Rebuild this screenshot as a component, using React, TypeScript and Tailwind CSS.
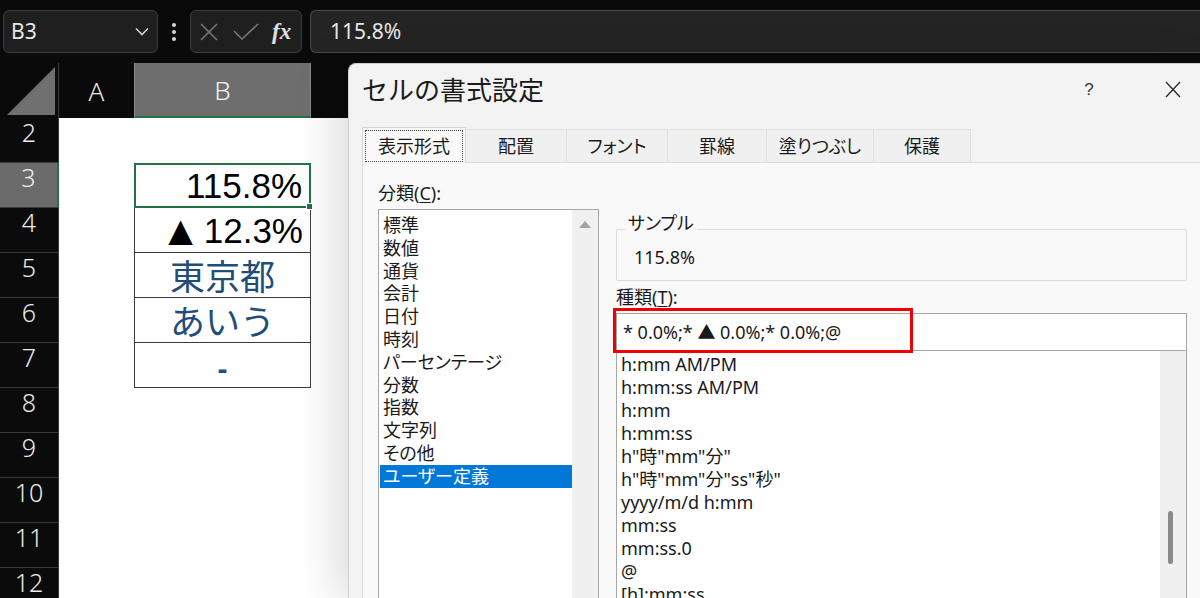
import React from "react";

function TopBar() {
  return (
    <div className="flex h-[63px] shrink-0 items-start bg-[#0a0a0a] pt-[10px] font-['Noto_Sans',sans-serif]">
      <div className="ml-[3px] flex h-[43px] w-[155px] items-center justify-between rounded-[6px] border border-[#3c3c3c] bg-[#1f1f1f] pl-[7px] pr-[8px]">
        <span className="text-[21px] leading-none text-[#e6e6e6]">B3</span>
        <svg width="14" height="9" viewBox="0 0 14 9">
          <path d="M1 1.5l6 6 6-6" fill="none" stroke="#d0d0d0" strokeWidth="1.6" />
        </svg>
      </div>
      <div className="flex h-[43px] w-[32px] items-center justify-center">
        <svg width="6" height="20" viewBox="0 0 6 20">
          <circle cx="3" cy="3" r="2" fill="#d6d6d6" />
          <circle cx="3" cy="10" r="2" fill="#d6d6d6" />
          <circle cx="3" cy="17" r="2" fill="#d6d6d6" />
        </svg>
      </div>
      <div className="flex h-[43px] w-[112px] items-center rounded-[6px] border border-[#3c3c3c] bg-[#1f1f1f] pl-[9px]">
        <svg width="18" height="18" viewBox="0 0 18 18">
          <path d="M1 1l16 16M17 1L1 17" stroke="#7a7a7a" strokeWidth="1.5" fill="none" />
        </svg>
        <svg className="ml-[15px]" width="26" height="17" viewBox="0 0 26 17">
          <path d="M1 8l8 8L25 1" stroke="#7a7a7a" strokeWidth="1.5" fill="none" />
        </svg>
        <span className="ml-[13px] font-['Liberation_Serif',serif] text-[23px] italic font-bold leading-none text-[#e0e0e0]">fx</span>
      </div>
      <div className="ml-[8px] flex h-[43px] flex-1 items-center rounded-l-[6px] border border-r-0 border-[#4a4a4a] bg-[#242424] pl-[19px]">
        <span className="text-[21px] leading-none text-[#e6e6e6]">115.8%</span>
      </div>
    </div>
  );
}

function RowHead({ n, active }: { n: number; active?: boolean }) {
  return (
    <div
      className={
        active
          ? "flex w-[59px] shrink-0 items-center justify-center border-b border-r-2 border-b-[#3a3a3a] border-r-[#217346] bg-[#6b6b6b] pb-[15px] text-[25px] font-light leading-none text-[#ececec]"
          : "flex w-[59px] shrink-0 items-center justify-center border-b border-r border-[#3a3a3a] bg-[#0b0b0b] pb-[15px] text-[25px] font-light leading-none text-[#ececec]"
      }
    >
      {n}
    </div>
  );
}

function Row({ n, active, children }: { n: number; active?: boolean; children?: React.ReactNode }) {
  return (
    <div className="flex h-[45px] shrink-0">
      <RowHead n={n} active={active} />
      <div className="w-[75px] shrink-0 bg-white" />
      <div className="w-[177px] shrink-0 bg-white">{children}</div>
      <div className="flex-1 bg-white" />
    </div>
  );
}

const cellNum = "font-['Liberation_Sans',sans-serif] text-[35px] leading-none text-black";
const cellJp = "font-['Noto_Sans_CJK_JP',sans-serif] text-[35px] leading-none text-[#1f4e79]";

function Sheet() {
  return (
    <div className="flex w-[348px] shrink-0 flex-col font-['Noto_Sans',sans-serif]">
      <div className="flex h-[55px] shrink-0 bg-[#0a0a0a]">
        <div className="flex w-[59px] shrink-0 items-end justify-end border-r border-[#3a3a3a] pb-[3px] pr-[3px]">
          <svg width="48" height="48" viewBox="0 0 48 48">
            <path d="M0 48L48 48L48 0Z" fill="#6f6f6f" />
          </svg>
        </div>
        <div className="flex w-[75px] shrink-0 items-center justify-center text-[26px] font-light leading-none text-[#ececec]">A</div>
        <div className="flex w-[177px] shrink-0 items-center justify-center border-b-2 border-x border-b-[#217346] border-x-[#8a8a8a] bg-[#6e6e6e] text-[26px] font-light leading-none text-[#f2f2f2]">
          B
        </div>
        <div className="flex-1" />
      </div>
      <Row n={2} />
      <Row n={3} active>
        <div className="relative flex h-full items-center justify-end border-2 border-[#217346] pr-[7px]">
          <span className={cellNum}>115.8%</span>
          <div className="absolute -bottom-[4px] -right-[4px] h-[7px] w-[7px] border border-white bg-[#217346]" />
        </div>
      </Row>
      <Row n={4}>
        <div className="flex h-full items-center justify-end border-x-[1.5px] border-b-[1.5px] border-[#3a3a3a] pr-[7px]">
          <span className="mr-[11px] font-['DejaVu_Sans',sans-serif] text-[32px] leading-none text-black">▲</span>
          <span className={cellNum}>12.3%</span>
        </div>
      </Row>
      <Row n={5}>
        <div className="flex h-full items-center justify-center border-x-[1.5px] border-b-[1.5px] border-[#3a3a3a] pb-[1px]">
          <span className={cellJp}>東京都</span>
        </div>
      </Row>
      <Row n={6}>
        <div className="flex h-full items-center justify-center border-x-[1.5px] border-b-[1.5px] border-[#3a3a3a] pb-[1px]">
          <span className={cellJp}>あいう</span>
        </div>
      </Row>
      <Row n={7}>
        <div className="flex h-full items-center justify-center border-x-[1.5px] border-b-[1.5px] border-[#3a3a3a] pt-[8px]">
          <span className="font-['Liberation_Sans',sans-serif] text-[30px] font-bold leading-none text-[#1f4e79]">-</span>
        </div>
      </Row>
      <Row n={8} />
      <Row n={9} />
      <Row n={10} />
      <Row n={11} />
      <Row n={12} />
    </div>
  );
}

const tabs = [
  { label: "配置", w: "w-[101px]" },
  { label: "フォント", w: "w-[101px]" },
  { label: "罫線", w: "w-[99px]" },
  { label: "塗りつぶし", w: "w-[107px]" },
  { label: "保護", w: "w-[97px]" },
];

const categories = [
  "標準",
  "数値",
  "通貨",
  "会計",
  "日付",
  "時刻",
  "パーセンテージ",
  "分数",
  "指数",
  "文字列",
  "その他",
  "ユーザー定義",
];

const formats = [
  "h:mm AM/PM",
  "h:mm:ss AM/PM",
  "h:mm",
  "h:mm:ss",
  'h"時"mm"分"',
  'h"時"mm"分"ss"秒"',
  "yyyy/m/d h:mm",
  "mm:ss",
  "mm:ss.0",
  "@",
  "[h]:mm:ss",
];

function Dialog() {
  return (
    <div className="relative flex min-w-0 flex-1 flex-col rounded-tl-[8px] border-l border-t border-[#cfcfcf] bg-[#f3f3f3] font-['Noto_Sans','Noto_Sans_CJK_JP',sans-serif] text-[#1a1a1a] shadow-[-14px_0_40px_rgba(0,0,0,0.13)] [font-feature-settings:'palt']">
      <div className="flex h-[51px] shrink-0 items-center pl-[13px]">
        <span className="text-[26px] leading-none [font-feature-settings:normal]">セルの書式設定</span>
        <span className="ml-auto w-[20px] text-center font-['Liberation_Sans',sans-serif] text-[17px] leading-none text-[#333]">?</span>
        <div className="ml-[62px] mr-[15px] flex w-[24px] justify-center">
          <svg width="16" height="17" viewBox="0 0 16 17">
            <path d="M1 1l14 15M15 1L1 16" stroke="#2a2a2a" strokeWidth="1.3" fill="none" />
          </svg>
        </div>
      </div>
      <div className="flex h-[47px] shrink-0 items-end pl-[13px]">
        <div className="relative z-10 -mb-px flex h-[36px] w-[104px] shrink-0 items-stretch border-x border-t border-[#d6d6d6] bg-[#f9f9f9] p-[2px] pb-[1px]">
          <div className="flex flex-1 items-center justify-center border border-dotted border-[#444] text-[18px] leading-none">表示形式</div>
        </div>
        {tabs.map((t) => (
          <div
            key={t.label}
            className={`flex h-[33px] shrink-0 items-center justify-center border-r border-t border-[#e0e0e0] bg-[#f0f0f0] text-[18px] leading-none ${t.w}`}
          >
            {t.label}
          </div>
        ))}
      </div>
      <div className="ml-[13px] flex flex-1 gap-[17px] border-l border-t border-[#dcdcdc] bg-[#f9f9f9] pl-[15px] pt-[20px]">
        <div className="flex w-[221px] shrink-0 flex-col">
          <div className="h-[26px] text-[18px] leading-[20px]">
            分類(<span className="underline underline-offset-2">C</span>):
          </div>
          <div className="flex h-[400px] border border-[#a6a6a6] bg-white">
            <div className="flex-1 pl-[1px] pt-[4px]">
              {categories.map((c) => (
                <div
                  key={c}
                  className={
                    c === "ユーザー定義"
                      ? "h-[22.8px] bg-[#0078d7] pl-[3px] text-[18px] leading-[22.8px] text-white"
                      : "h-[22.8px] pl-[3px] text-[18px] leading-[22.8px]"
                  }
                >
                  {c}
                </div>
              ))}
            </div>
            <div className="flex w-[26px] shrink-0 justify-center bg-[#f0f0f0] pt-[10px]">
              <svg width="12" height="8" viewBox="0 0 12 8">
                <path d="M0 8L6 1L12 8Z" fill="#a3a3a3" />
              </svg>
            </div>
          </div>
        </div>
        <div className="flex w-[571px] shrink-0 flex-col">
          <fieldset className="mt-[30px] rounded-[2px] border border-[#dcdcdc] pb-[13px]">
            <legend className="ml-[8px] h-[32px] px-[3px] text-[18px] leading-[20px]">サンプル</legend>
            <div className="mt-[2px] pl-[17px] text-[18px] leading-[20px]">115.8%</div>
          </fieldset>
          <div className="mt-[6px] h-[26px] text-[18px] leading-[20px]">
            種類(<span className="underline underline-offset-2">T</span>):
          </div>
          <div className="relative flex h-[38px] shrink-0 items-center border border-[#a6a6a6] bg-white pl-[6px] text-[18px] leading-none">
            * 0.0%;* ▲ 0.0%;* 0.0%;@
            <div className="absolute -left-[4px] -top-[6px] h-[45px] w-[300px] border-[3px] border-[#f00000]" />
          </div>
          <div className="flex h-[260px] border-x border-b border-[#a6a6a6] bg-white">
            <div className="flex-1 pl-[4px] pt-[2px]">
              {formats.map((f) => (
                <div key={f} className="h-[23px] whitespace-nowrap text-[18px] leading-[23px]">
                  {f}
                </div>
              ))}
            </div>
            <div className="w-[26px] shrink-0 bg-[#f0f0f0] pl-[8px] pt-[160px]">
              <div className="h-[53px] w-[5px] rounded-full bg-[#8a8a8a]" />
            </div>
          </div>
        </div>
      </div>
    </div>
  );
}

export default function App() {
  return (
    <div className="flex h-[598px] w-[1200px] flex-col overflow-hidden bg-[#0a0a0a]">
      <TopBar />
      <div className="flex min-h-0 flex-1">
        <Sheet />
        <Dialog />
      </div>
    </div>
  );
}
